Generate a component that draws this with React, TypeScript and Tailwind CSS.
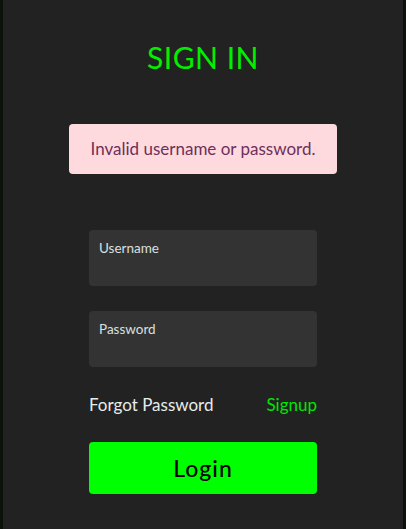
export default function App() {
  return (
    <div className="min-h-[529px] bg-[#0c110c] px-[3px]" style={{ fontFamily: "Lato, 'Noto Sans', sans-serif" }}>
      <div className="flex min-h-[529px] flex-col items-center bg-[#222222]">
        <h1 className="mt-[38px] text-[30px] leading-[38px] tracking-[0.5px] text-[#00f000]">SIGN IN</h1>

        <div className="mt-[48px] flex h-[50px] w-[268px] items-center justify-center rounded-[4px] bg-[#fedadf] text-[17px] text-[#6f2f5a]">
          Invalid username or password.
        </div>

        <form className="mt-[56px] flex w-[228px] flex-col">
          <div className="h-[56px] rounded-[4px] bg-[#333333] px-[10px] pt-[10px]">
            <label className="block text-[13.5px] leading-[16px] text-[#d8e0e0]">Username</label>
            <input className="w-full bg-transparent text-[14px] text-white outline-none" />
          </div>
          <div className="mt-[25px] h-[56px] rounded-[4px] bg-[#333333] px-[10px] pt-[10px]">
            <label className="block text-[13.5px] leading-[16px] text-[#d8e0e0]">Password</label>
            <input type="password" className="w-full bg-transparent text-[14px] text-white outline-none" />
          </div>

          <div className="mt-[28px] flex items-center justify-between text-[17px] leading-[20px]">
            <span className="text-[#e6ecec]">Forgot Password</span>
            <span className="text-[#00e600]">Signup</span>
          </div>

          <button
            type="button"
            className="mt-[27px] h-[52px] rounded-[4px] bg-[#00ff00] text-[23px] font-medium tracking-[1px] text-black"
          >
            Login
          </button>
        </form>
      </div>
    </div>
  );
}
